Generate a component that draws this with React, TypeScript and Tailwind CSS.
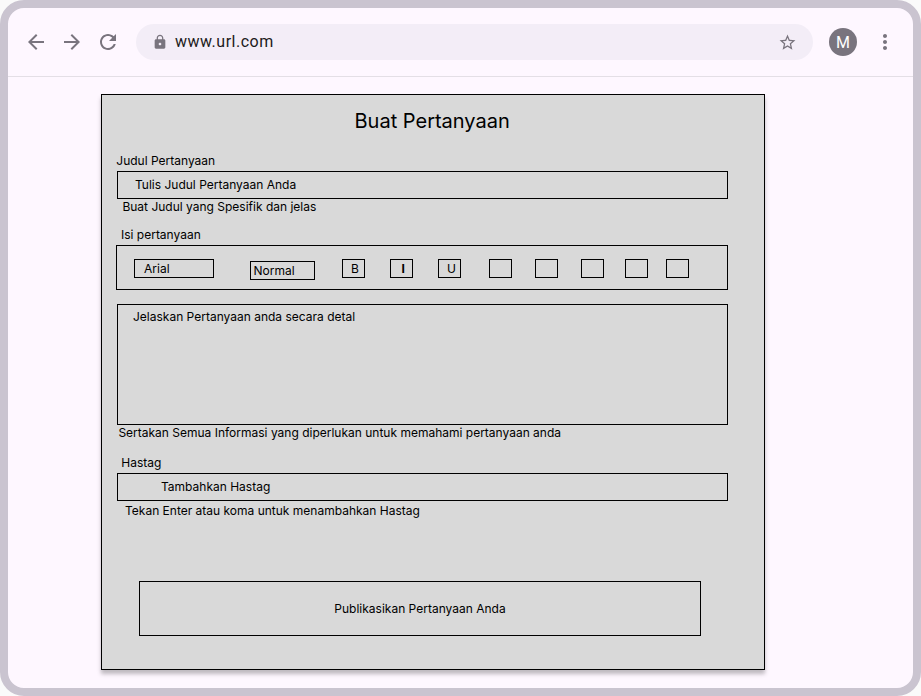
import type { ReactNode } from 'react';

function Icon({ d, size = 24, className = '' }: { d: string; size?: number; className?: string }) {
  return (
    <svg width={size} height={size} viewBox="0 0 24 24" fill="currentColor" className={`shrink-0 ${className}`}>
      <path d={d} />
    </svg>
  );
}

function BrowserBar() {
  return (
    <header className="flex h-[69px] shrink-0 items-center border-b border-[#e4dfe6] pl-4 pr-4 font-['Roboto',sans-serif] text-[#79747e]">
      <Icon d="M20 11H7.83l5.59-5.59L12 4l-8 8 8 8 1.41-1.41L7.83 13H20v-2z" />
      <Icon className="ml-3" d="M12 4l-1.41 1.41L16.17 11H4v2h12.17l-5.58 5.59L12 20l8-8z" />
      <Icon
        className="ml-3"
        d="M17.65 6.35C16.2 4.9 14.21 4 12 4c-4.42 0-7.99 3.58-7.99 8s3.57 8 7.99 8c3.73 0 6.84-2.55 7.73-6h-2.08c-.82 2.33-3.04 4-5.65 4-3.31 0-6-2.69-6-6s2.69-6 6-6c1.66 0 3.14.69 4.22 1.78L13 11h7V4l-2.35 2.35z"
      />
      <div className="ml-4 flex h-9 w-[677px] items-center rounded-full bg-[#f3edf7] pl-[15.5px] pr-[16.5px]">
        <Icon
          size={16}
          d="M18 8h-1V6c0-2.76-2.24-5-5-5S7 3.24 7 6v2H6c-1.1 0-2 .9-2 2v10c0 1.1.9 2 2 2h12c1.1 0 2-.9 2-2V10c0-1.1-.9-2-2-2zm-6 9c-1.1 0-2-.9-2-2s.9-2 2-2 2 .9 2 2-.9 2-2 2zm3.1-9H8.9V6c0-1.71 1.39-3.1 3.1-3.1 1.71 0 3.1 1.39 3.1 3.1v2z"
        />
        <span className="ml-[7.5px] flex-1 text-base leading-6 tracking-[0.5px] text-[#1d1b20]">www.url.com</span>
        <Icon
          size={19}
          d="M22 9.24l-7.19-.62L12 2 9.19 8.63 2 9.24l5.46 4.73L5.82 21 12 17.27 18.18 21l-1.63-7.03L22 9.24zM12 15.4l-3.76 2.27 1-4.28-3.32-2.88 4.38-.38L12 6.1l1.71 4.04 4.38.38-3.32 2.88 1 4.28L12 15.4z"
        />
      </div>
      <div className="ml-4 flex size-7 items-center justify-center rounded-full bg-[#79747e] pt-px text-base leading-6 text-white">M</div>
      <Icon
        className="ml-4"
        d="M12 8c1.1 0 2-.9 2-2s-.9-2-2-2-2 .9-2 2 .9 2 2 2zm0 2c-1.1 0-2 .9-2 2s.9 2 2 2 2-.9 2-2-.9-2-2-2zm0 6c-1.1 0-2 .9-2 2s.9 2 2 2 2-.9 2-2-.9-2-2-2z"
      />
    </header>
  );
}

function Tool({ className = '', children }: { className?: string; children?: ReactNode }) {
  return <button className={`h-[19px] w-[23px] shrink-0 border border-black text-left leading-[17px] ${className}`}>{children}</button>;
}

function Toolbar() {
  return (
    <div className="mt-0.5 ml-3.5 flex h-[45px] w-[612px] items-start border border-black pt-[13px] pl-[17px]">
      <div className="h-[19px] w-20 border border-black pl-[9px] leading-[17px]">Arial</div>
      <div className="mt-0.5 ml-9 h-[19px] w-[65px] border border-black pl-[2.5px] leading-[17px]">Normal</div>
      <Tool className="ml-[27px] pl-2">B</Tool>
      <Tool className="ml-[25px] pl-[10.5px] font-bold">I</Tool>
      <Tool className="ml-[25px] pl-2">U</Tool>
      <Tool className="ml-7" />
      <Tool className="ml-[23px]" />
      <Tool className="ml-[23px]" />
      <Tool className="ml-[21px]" />
      <Tool className="ml-[18px]" />
    </div>
  );
}

export default function App() {
  return (
    <div className="h-[696px] w-[921px] bg-[#fafafa]">
      <div className="flex h-full flex-col overflow-hidden rounded-[24px] border-8 border-[#cac4d0] bg-[#fef7ff]">
        <BrowserBar />
        <main className="mt-[17px] ml-[93px] h-[576px] w-[664px] border border-black bg-[#d9d9d9] font-['Inter',sans-serif] text-xs leading-4 text-black shadow-[0_4px_4px_rgba(0,0,0,0.25)]">
          <h1 className="mt-3.5 ml-[252.5px] text-xl leading-6">Buat Pertanyaan</h1>
          <p className="mt-5 ml-[14.3px]">Judul Pertanyaan</p>
          <div className="mt-0.5 ml-[15px] h-7 w-[611px] border border-black pl-[17px] leading-[26px]">Tulis Judul Pertanyaan Anda</div>
          <p className="ml-[20.4px]">Buat Judul yang Spesifik dan jelas</p>
          <p className="mt-3 ml-[19px]">Isi pertanyaan</p>
          <Toolbar />
          <div className="mt-3.5 ml-[15px] h-[121px] w-[611px] border border-black pt-1 pl-[15px]">Jelaskan Pertanyaan anda secara detal</div>
          <p className="ml-[16.4px]">Sertakan Semua Informasi yang diperlukan untuk memahami pertanyaan anda</p>
          <p className="mt-3.5 ml-[19.3px]">Hastag</p>
          <div className="mt-0.5 ml-[15px] h-7 w-[611px] border border-black pl-[43px] leading-[26px]">Tambahkan Hastag</div>
          <p className="mt-0.5 ml-[23px]">Tekan Enter atau koma untuk menambahkan Hastag</p>
          <button className="mt-[62px] ml-[37px] block h-[55px] w-[562px] border border-black">Publikasikan Pertanyaan Anda</button>
        </main>
      </div>
    </div>
  );
}
